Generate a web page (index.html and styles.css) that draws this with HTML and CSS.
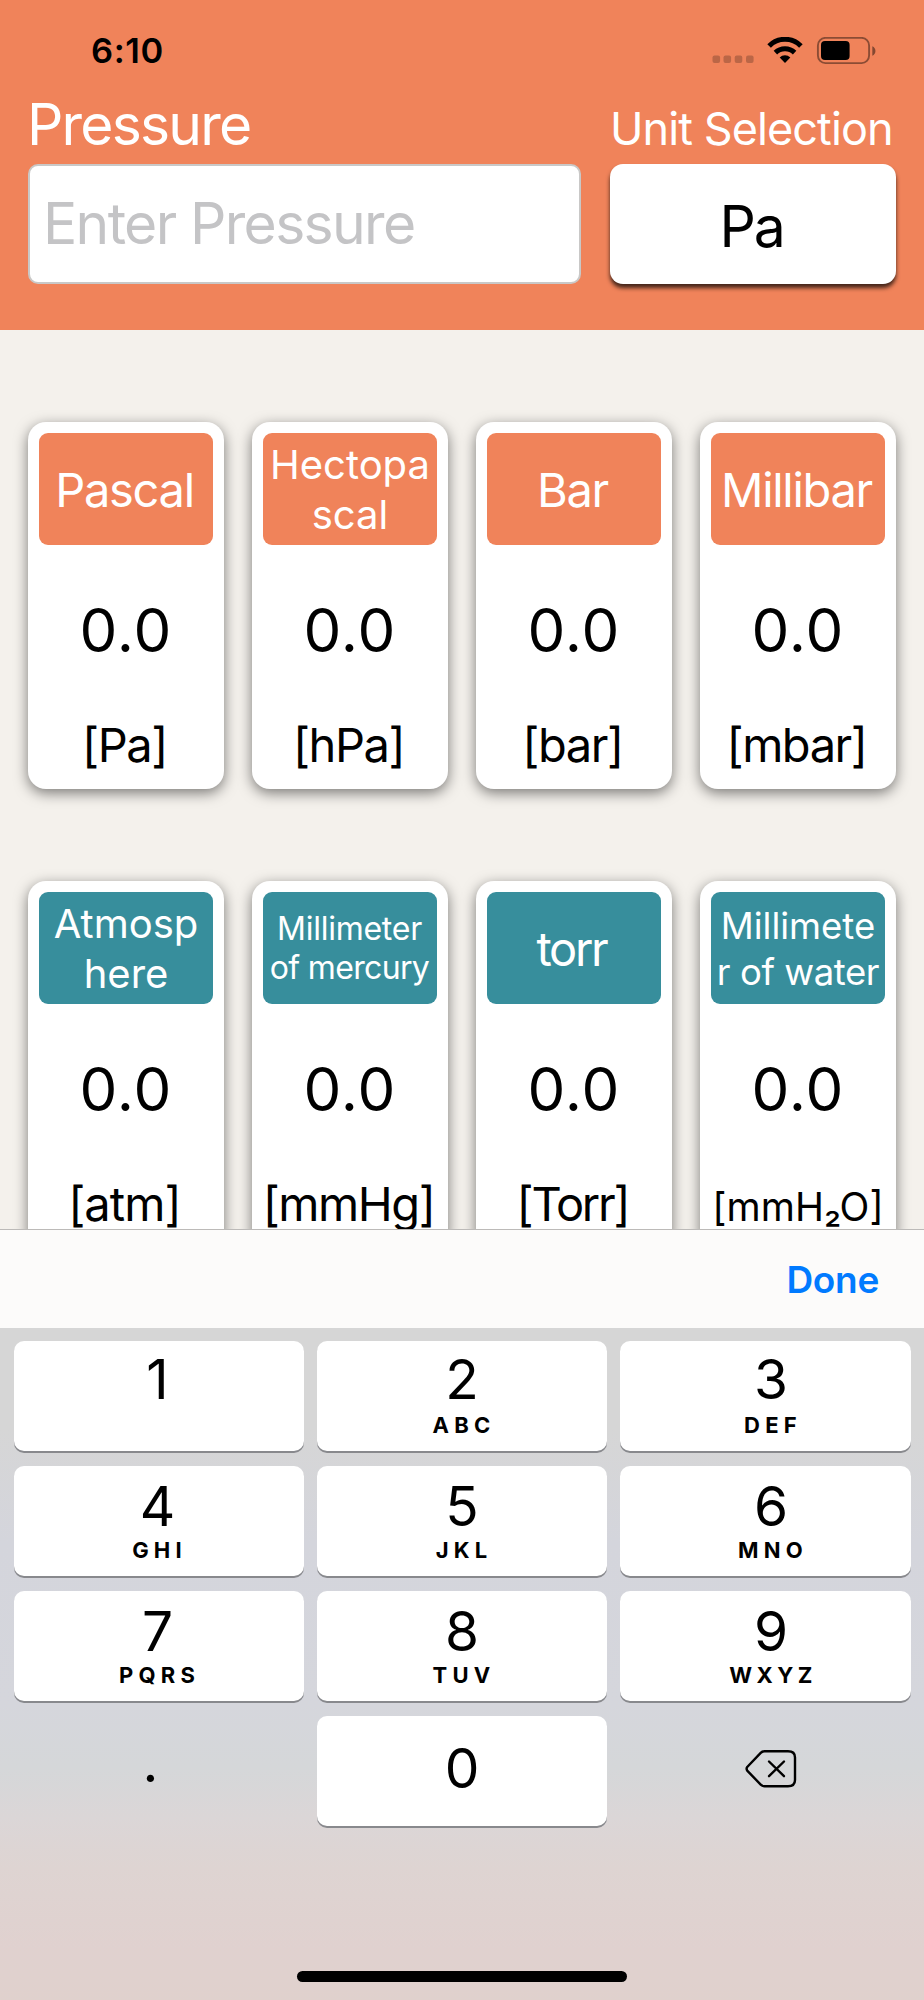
FILE: index.html
```html
<!DOCTYPE html>
<html lang="en">
<head>
<meta charset="utf-8">
<title>Pressure</title>
<link rel="stylesheet" href="styles.css">
</head>
<body>
<div class="screen">
  <header class="header">
    <div class="status">
      <span class="time">6:10</span>
      <svg class="status-icons" width="166" height="28" viewBox="0 0 166 28">
        <g fill="#000" fill-opacity=".22">
          <rect x="0.5" y="18.5" width="7.6" height="7.6" rx="2"/>
          <rect x="11.5" y="18.5" width="7.6" height="7.6" rx="2"/>
          <rect x="22.7" y="18.5" width="7.6" height="7.6" rx="2"/>
          <rect x="34" y="18.5" width="7.6" height="7.6" rx="2"/>
        </g>
        <g fill="none" stroke="#000" stroke-width="5">
          <path d="M57.1 9A22.2 22.2 0 0 1 88.9 9"/>
          <path d="M63.4 15.6A13.8 13.8 0 0 1 82.6 15.6"/>
        </g>
        <path d="M67.7 20.4A7.6 7.6 0 0 1 78.3 20.4L73 26Z"/>
        <rect x="105.9" y="0.9" width="51.2" height="25.2" rx="7.5" fill="none" stroke="#000" stroke-opacity=".42" stroke-width="1.9"/>
        <rect x="109" y="4" width="28.6" height="19" rx="4"/>
        <path d="M160.3 9.3C164.5 10.8 164.5 17.2 160.3 18.7Z" fill-opacity=".45"/>
      </svg>
    </div>
    <div class="form">
      <div class="field">
        <label class="label-pressure">Pressure</label>
        <div class="input">Enter Pressure</div>
      </div>
      <div class="field">
        <label class="label-unit">Unit Selection</label>
        <button class="select">Pa</button>
      </div>
    </div>
  </header>

  <main class="cards">
    <article class="card"><h2 class="name">Pascal</h2><p class="value">0.0</p><p class="unit">[Pa]</p></article>
    <article class="card"><h2 class="name two">Hectopa<br>scal</h2><p class="value">0.0</p><p class="unit">[hPa]</p></article>
    <article class="card"><h2 class="name">Bar</h2><p class="value">0.0</p><p class="unit">[bar]</p></article>
    <article class="card"><h2 class="name">Millibar</h2><p class="value">0.0</p><p class="unit">[mbar]</p></article>
    <article class="card teal"><h2 class="name two">Atmosp<br>here</h2><p class="value">0.0</p><p class="unit atm">[atm]</p></article>
    <article class="card teal"><h2 class="name mercury">Millimeter<br><span class="tight">of mercury</span></h2><p class="value">0.0</p><p class="unit">[mmHg]</p></article>
    <article class="card teal"><h2 class="name torr">torr</h2><p class="value">0.0</p><p class="unit torr">[Torr]</p></article>
    <article class="card teal"><h2 class="name water">Millimete<br><span class="tight">r of water</span></h2><p class="value">0.0</p><p class="unit small">[mmH₂O]</p></article>
  </main>

  <div class="toolbar"><button class="done">Done</button></div>

  <section class="keyboard">
    <div class="keys">
      <div class="key left first"><b>1</b></div>
      <div class="key first"><b>2</b><i>ABC</i></div>
      <div class="key right first"><b>3</b><i>DEF</i></div>
      <div class="key left"><b>4</b><i>GHI</i></div>
      <div class="key"><b>5</b><i>JKL</i></div>
      <div class="key right"><b>6</b><i>MNO</i></div>
      <div class="key left"><b>7</b><i>PQRS</i></div>
      <div class="key"><b>8</b><i>TUV</i></div>
      <div class="key right"><b>9</b><i class="wide">WXYZ</i></div>
      <div class="key plain dot"><b>.</b></div>
      <div class="key zero"><b>0</b></div>
      <div class="key plain right">
        <svg class="backspace" width="52" height="38" viewBox="0 0 52 38" fill="none" stroke="#000" stroke-width="2.4" stroke-linecap="round" stroke-linejoin="round">
          <path d="M19.5 1.3H43Q50 1.3 50 7.5V30Q50 36.2 43 36.2H19.5Q17.3 36.2 15.7 34.6L2.2 20.6Q1 18.8 2.2 17L15.7 2.9Q17.3 1.3 19.5 1.3Z"/>
          <path d="M24 11.5L39 26.2M39 11.5L24 26.2"/>
        </svg>
      </div>
    </div>
    <div class="home"></div>
  </section>
</div>
</body>
</html>
```
FILE: styles.css
```css
* { box-sizing: border-box; margin: 0; padding: 0; }
body { background: #f4f1ec; font-family: Inter, "Liberation Sans", sans-serif; color: #000; }
button { border: 0; background: none; font: inherit; color: inherit; }

.screen { width: 924px; height: 2000px; display: flex; flex-direction: column; overflow: hidden; }

.header { flex: none; height: 330px; background: #f0835a; }
.status { height: 101px; padding: 0 46px 0 91px; display: flex; justify-content: space-between; align-items: center; }
.time { font-size: 34.5px; font-weight: 600; letter-spacing: .6px; }
.status-icons { margin-right: 0; }
.form { display: grid; grid-template-columns: 553px 286px; gap: 29px; padding-left: 28px; }
.field { display: flex; flex-direction: column; }
.label-pressure { height: 63px; font-size: 57px; line-height: 47px; letter-spacing: -1.8px; color: #fff; margin-left: -1px; }
.label-unit { height: 63px; font-size: 45px; line-height: 55px; letter-spacing: -.92px; color: #fff; white-space: nowrap; }
.input { height: 120px; border: 2px solid #c9c8c7; border-radius: 10px; background: #fff; color: #c4c4c6; font-size: 57px; line-height: 115px; letter-spacing: -1.64px; padding-left: 13px; }
.select { height: 120px; border-radius: 13px; background: #fff; font-size: 57px; line-height: 122px; letter-spacing: -2.2px; text-align: center; padding: 2px 3px 0 0; box-shadow: 0 4px 4px rgba(0, 0, 0, .72); }

.cards { flex: none; height: 899px; overflow: hidden; padding: 92px 28px 0; display: grid; grid-template-columns: repeat(4, 196px); grid-auto-rows: 367px; gap: 92px 28px; }
.card { background: #fff; border-radius: 18px; padding: 11px; text-align: center; box-shadow: 0 4px 14px rgba(0, 0, 0, .5); }
.name { height: 111.5px; border-radius: 9px; background: #f0835a; color: #fff; font-size: 47px; font-weight: 400; line-height: 114px; letter-spacing: -1.3px; white-space: nowrap; padding-right: 3px; }
.teal .name { background: #378e9c; }
.name.two { font-size: 40px; line-height: 50.3px; letter-spacing: 0; padding: 7px 0 0; }
.name.mercury { font-size: 32px; line-height: 39px; letter-spacing: -.25px; padding: 17px 1px 0 0; }
.name.water { font-size: 36.5px; line-height: 45.5px; letter-spacing: 0; padding: 12px 0 0; }
.mercury .tight { letter-spacing: -.66px; }
.water .tight { letter-spacing: -.43px; }
.name.torr { letter-spacing: -2.3px; padding-right: 5px; }
.value { height: 173px; font-size: 60px; line-height: 170px; letter-spacing: .95px; }
.unit { font-size: 47px; line-height: 54px; letter-spacing: -1.45px; margin: 0 -7px 0 -10px; white-space: nowrap; }
.unit.atm { letter-spacing: -.9px; }
.unit.torr { letter-spacing: -2.2px; }
.unit.small { font-size: 39px; line-height: 59px; letter-spacing: 0; margin: 0 -8px; }

.toolbar { flex: none; height: 99px; border-top: 1px solid #bcbab8; background: #fcfbfa; display: flex; justify-content: flex-end; align-items: center; padding-right: 45px; }
.done { font-size: 37px; font-weight: 600; letter-spacing: -.3px; color: #007aff; }

.keyboard { flex: 1; display: flex; flex-direction: column; background: linear-gradient(#d6d6d6 0, #d6d6d6 100px, #d4d5dc 215px, #d5d6dc 375px, #d5d7d9 440px, #dbd6d7 490px, #ded4d2 540px, #e0d1cf 620px, #e0d1cd 672px); }
.keys { margin: 13px 0 0 14px; display: grid; grid-template-columns: 290px 290px 291px; grid-auto-rows: 110px; gap: 15px 13px; }
.key { background: #fff; border-radius: 10px; box-shadow: 0 2px 0 #88898d; display: flex; flex-direction: column; align-items: center; }
.key b { height: 76px; font-size: 55px; font-weight: 400; line-height: 80px; }
.key.first b { line-height: 76px; }
.key i { font-size: 22px; font-style: normal; font-weight: 700; line-height: 16px; letter-spacing: 5.2px; padding-left: 4px; }
.key i.wide { letter-spacing: 4.4px; }
.key.left { padding-right: 3px; }
.key.right { padding-left: 11px; }
.key.plain { background: none; box-shadow: none; justify-content: center; }
.key.dot b { height: 98px; padding-right: 17px; }
.key.zero b { height: 110px; line-height: 105px; }
.backspace { margin-bottom: 5px; }
.home { width: 330px; height: 11px; margin: 145px auto 0; border-radius: 6px; background: #000; }
```
